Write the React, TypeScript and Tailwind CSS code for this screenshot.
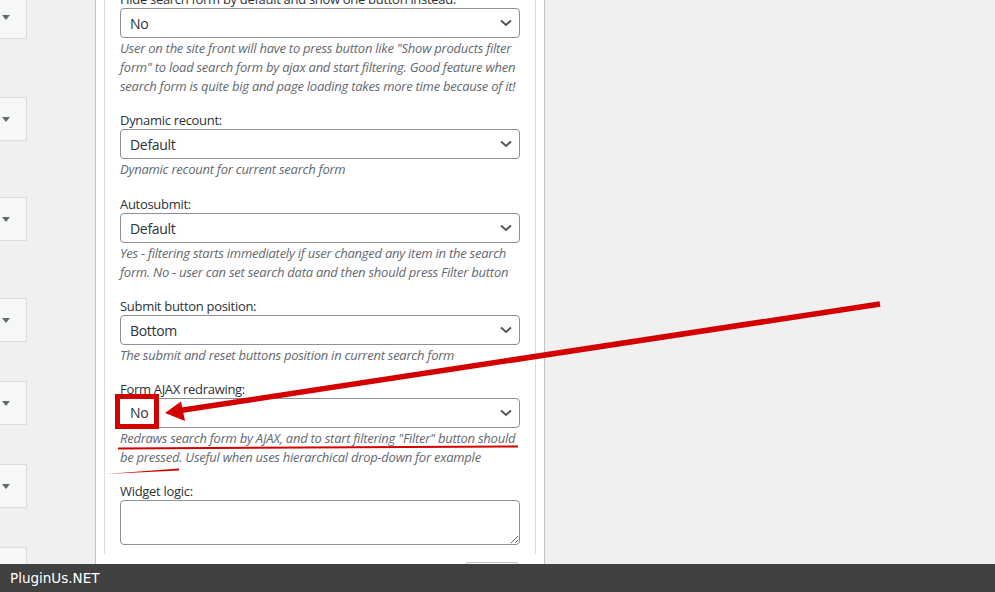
import React from "react";

type Field = {
   label: string;
   value?: string;
   desc?: string[];
   textarea?: boolean;
   pad?: string;
};

const fields: Field[] = [
   {
      label: "Hide search form by default and show one button instead:",
      value: "No",
      desc: [
         "User on the site front will have to press button like \"Show products filter",
         "form\" to load search form by ajax and start filtering. Good feature when",
         "search form is quite big and page loading takes more time because of it!",
      ],
   },
   {
      label: "Dynamic recount:",
      value: "Default",
      desc: ["Dynamic recount for current search form"],
      pad: "pb-[16px]",
   },
   {
      label: "Autosubmit:",
      value: "Default",
      desc: [
         "Yes - filtering starts immediately if user changed any item in the search",
         "form. No - user can set search data and then should press Filter button",
      ],
   },
   {
      label: "Submit button position:",
      value: "Bottom",
      desc: ["The submit and reset buttons position in current search form"],
   },
   {
      label: "Form AJAX redrawing:",
      value: "No",
      desc: [
         "Redraws search form by AJAX, and to start filtering \"Filter\" button should",
         "be pressed. Useful when uses hierarchical drop-down for example",
      ],
   },
   { label: "Widget logic:", textarea: true },
];

// collapsed widgets on the left, only the right edge shows
const side_margins = ["-mt-[5px]", "mt-[58px]", "mt-[56px]", "mt-[57px]", "mt-[39px]", "mt-[39px]", "mt-[39px]"];

function Chevron() {
   return (
      <svg width="12" height="8" viewBox="0 0 12 8" className="shrink-0">
         <path d="M1 1.5 L6 6 L11 1.5" fill="none" stroke="#50575e" strokeWidth="2" />
      </svg>
   );
}

function SelectBox({ value }: { value: string }) {
   return (
      <div className="h-[30px] flex items-center justify-between pl-[9px] pr-[7px] border border-[#8c8f94] rounded-[4px] bg-white text-[14px] tracking-[-0.3px] text-[#2c3338]">
         <span>{value}</span>
         <Chevron />
      </div>
   );
}

function FieldRow({ field }: { field: Field }) {
   return (
      <div className={`flex flex-col ${field.pad || "pb-[15px]"}`}>
         <label className="h-[18px] leading-[19px] text-[13px] tracking-[-0.3px] text-[#2c3338] whitespace-nowrap">
            {field.label}
         </label>
         {field.textarea ? (
            <textarea className="h-[45px] w-full border border-[#8c8f94] rounded-[4px] bg-white resize-y" />
         ) : (
            <SelectBox value={field.value || ""} />
         )}
         {field.desc && (
            <p className="mt-[1px] text-[13px] leading-[19px] italic tracking-[-0.25px] text-[#646970]">
               {field.desc.map((line, i) => (
                  <span key={i} className="block whitespace-nowrap">
                     {line}
                  </span>
               ))}
            </p>
         )}
      </div>
   );
}

export default function App() {
   return (
      <div className="relative w-[995px] h-[592px] flex flex-col bg-[#f0f0f1] overflow-hidden font-['Open_Sans','Noto_Sans',sans-serif]">
         <div className="flex-1 flex overflow-hidden">
            <div className="w-[95px] shrink-0 flex flex-col">
               {side_margins.map((m, i) => (
                  <div
                     key={i}
                     className={`${m} w-[27px] h-[44px] shrink-0 flex items-center pl-[2px] bg-[#f6f7f7] border-y border-r border-[#dcdcde]`}
                  >
                     <svg width="8" height="5" viewBox="0 0 8 5">
                        <path d="M0 0 L8 0 L4 5 Z" fill="#646970" />
                     </svg>
                  </div>
               ))}
            </div>
            <div className="w-[450px] shrink-0 bg-white border-x border-[#c3c4c7] px-[8px]">
               <div className="h-full border-x border-[#dcdcde] px-[15px]">
                  <div className="-mt-[10px] flex flex-col">
                     {fields.map((f, i) => (
                        <FieldRow key={i} field={f} />
                     ))}
                     <div className="flex justify-end pr-[1px] mt-[2px]">
                        <div className="w-[54px] h-[30px] border border-[#c3c4c7] rounded-[3px] bg-[#f6f7f7]" />
                     </div>
                  </div>
               </div>
            </div>
         </div>
         <footer className="h-[28px] shrink-0 bg-[#404040] flex items-center pl-[10px] text-[13.5px] text-white font-['DejaVu_Sans',sans-serif]">
            PluginUs.NET
         </footer>

         {/* red annotations drawn over the screenshot */}
         <svg className="absolute inset-0 pointer-events-none" width="995" height="592" viewBox="0 0 995 592">
            <line x1="880" y1="304" x2="180" y2="410.5" stroke="#d40000" strokeWidth="5.5" />
            <polygon points="165,413 181,401.5 185,421" fill="#d40000" />
            <rect x="117.5" y="396.5" width="39" height="30" fill="white" stroke="#d40000" strokeWidth="5" />
            <text x="130" y="418" fontSize="14" letterSpacing="-0.3" fill="#2c3338" fontFamily="Open Sans, Noto Sans, sans-serif">
               No
            </text>
            <path d="M118 448.6 L518 446.4" stroke="#d40000" strokeWidth="2" />
            <path d="M106 474 L179 468.6 L179 470.4 Z" fill="#d40000" />
         </svg>
      </div>
   );
}
